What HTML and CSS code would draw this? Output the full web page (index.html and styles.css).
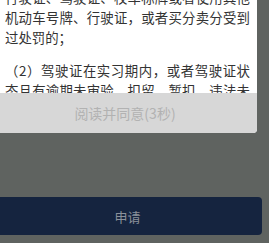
FILE: index.html
```html
<!DOCTYPE html>
<html lang="zh-CN">
<head>
<meta charset="utf-8">
<link rel="stylesheet" href="styles.css">
</head>
<body>
<div class="page">
  <div class="dialog">
    <div class="content">
      <div class="scroll">
        <p class="para">行驶证、驾驶证、校车标牌或者使用其他机动车号牌、行驶证，或者买分卖分受到过处罚的；</p>
        <p class="para">（2）驾驶证在实习期内，或者驾驶证状态且有逾期未审验、扣留、暂扣、违法未处理记录的；</p>
      </div>
    </div>
    <div class="agree">阅读并同意(3秒)</div>
  </div>
  <div class="apply">申请</div>
</div>
</body>
</html>
```
FILE: styles.css
```css
html, body {
  margin: 0;
  padding: 0;
  background: #5f6360;
  overflow: hidden;
}
body {
  width: 269px;
  height: 243px;
  font-family: "Noto Sans CJK SC", "Noto Sans", sans-serif;
}
.page {
  margin-left: -7px;
  display: flex;
  flex-direction: column;
}
.dialog {
  width: 264px;
  background: #ffffff;
  border-bottom-right-radius: 4px;
  overflow: hidden;
}
.content {
  height: 93px;
  overflow: hidden;
}
.scroll {
  margin-top: -13px;
  padding: 0 12px 0 12px;
}
.para {
  margin: 0 0 13px 0;
  width: 245px;
  font-size: 13.4px;
  line-height: 20px;
  color: #333333;
  text-align: justify;
}
.agree {
  height: 40px;
  background: #d7d7d7;
  color: #b2b2b2;
  font-size: 14px;
  display: flex;
  align-items: center;
  justify-content: center;
}
.apply {
  margin-top: 64px;
  width: 269px;
  height: 38px;
  background: #15243f;
  border-radius: 4px;
  color: #8a909a;
  font-size: 13px;
  display: flex;
  align-items: center;
  justify-content: center;
}
```
